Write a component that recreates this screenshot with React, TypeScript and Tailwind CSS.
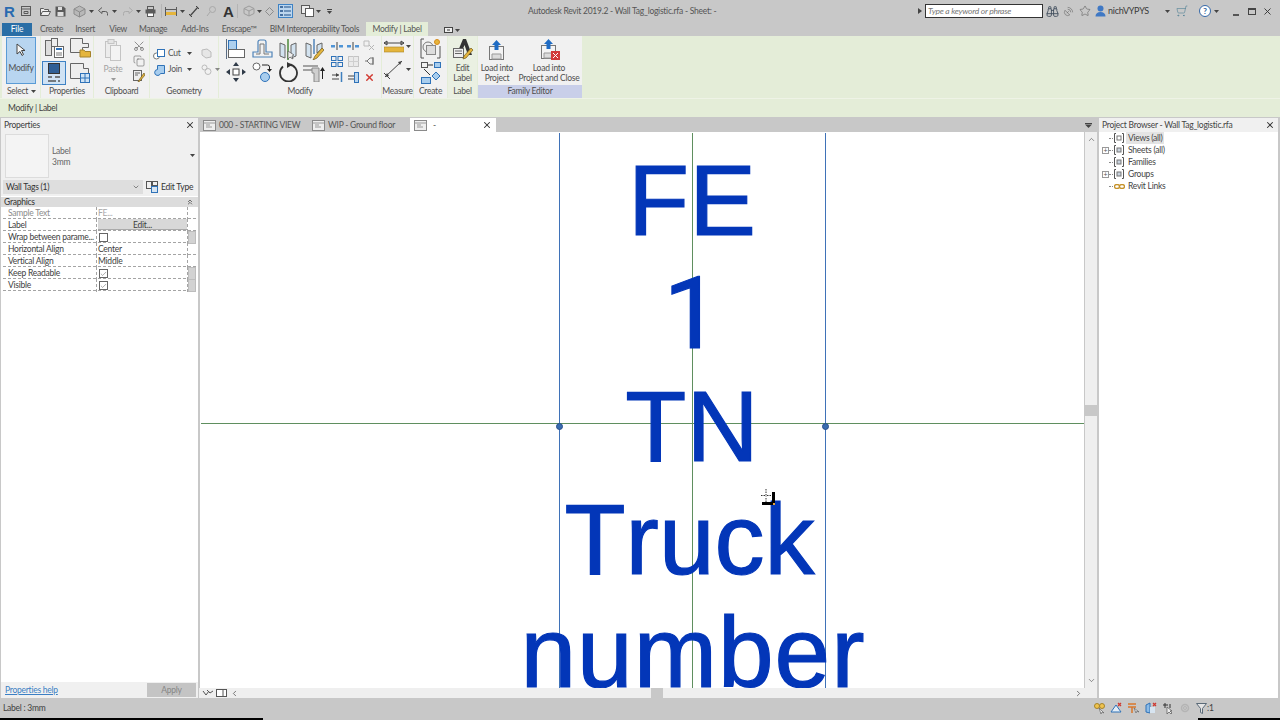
import type { ReactNode } from 'react'
import { X, Check, ChevronUp, ChevronDown, ChevronLeft, ChevronRight, ChevronsUp, Star, Binoculars, SatelliteDish, ShoppingCart, Scissors, Copy } from 'lucide-react'

const BLUE = '#2f72b8'
const GRAY = '#5a5a5a'
const GOLD = '#e5b53c'

function Ico({ w, h, children, className }: { w: number; h: number; children: ReactNode; className?: string }) {
  return (
    <svg width={w} height={h} viewBox={`0 0 ${w} ${h}`} fill="none" className={`shrink-0 ${className ?? ''}`}>
      {children}
    </svg>
  )
}

function Caret({ className }: { className?: string }) {
  return (
    <Ico w={5} h={3} className={className}>
      <path d="M0 0h5L2.500 3z" fill="#444" />
    </Ico>
  )
}

function ViewTabIcon() {
  return (
    <Ico w={13} h={11}>
      <rect x=".5" y=".5" width="12" height="10" fill="#eee" stroke="#8a8a8a" />
      <path d="M.5 3h12M3 5h4M3 7h6" stroke="#9a9a9a" />
    </Ico>
  )
}

function QuickAccess() {
  return (
    <div className="flex items-center w-[528px] h-full pl-[4px]">
      <span className="w-[12px] text-[15px] leading-none font-bold text-[#2a6bb0] font-['Liberation_Sans',sans-serif]">R</span>
      <Ico w={10} h={10} className="ml-[5px]"><rect x=".5" y=".5" width="9" height="9" stroke={GRAY} /><path d="M.5 3h9M3 5.500h4v2H3z" stroke={GRAY} /></Ico>
      <Ico w={11} h={9} className="ml-[9px]"><path d="M.5 8.500v-7h3l1 1h4v2M.5 8.500l2-4h8l-2 4z" stroke={GRAY} fill="#eee" /></Ico>
      <Ico w={11} h={11} className="ml-[4px]"><path d="M.5.500h8l2 2v8H.500z" fill={GRAY} /><rect x="3" y="1" width="4" height="3" fill="#ddd" /><rect x="2.500" y="6" width="6" height="4" fill="#ddd" /></Ico>
      <Ico w={13} h={13} className="ml-[7px]"><path d="M6.500 1 12 4v5l-5.500 3L1 9V4z" fill="#b8b8b8" stroke="#8c8c8c" /><path d="M1 4l5.500 3L12 4M6.500 7v5" stroke="#8c8c8c" /></Ico>
      <Caret className="ml-[3px]" />
      <Ico w={11} h={9} className="ml-[4px]"><path d="M4 .500.500 3.500 4 6.500V4.500h3.500a2 2 0 0 1 2 2v2" stroke={GRAY} /></Ico>
      <Caret className="ml-[3px]" />
      <Ico w={11} h={9} className="ml-[5px]"><path d="M7 .500l3.500 3L7 6.500V4.500H3.500a2 2 0 0 0-2 2v2" stroke="#aaa" /></Ico>
      <Caret className="ml-[3px]" />
      <Ico w={11} h={11} className="ml-[4px]"><rect x="2.500" y=".5" width="6" height="3" stroke={GRAY} /><rect x=".5" y="3.500" width="10" height="4" fill={GRAY} /><rect x="2.500" y="7" width="6" height="3.500" fill="#fff" stroke={GRAY} /></Ico>
      <div className="ml-[5px] w-px h-[14px] bg-[#b4b4b4]" />
      <Ico w={12} h={9} className="ml-[3px]"><path d="M.5 0v9M11.500 0v9" stroke={GRAY} /><rect x="1" y="5" width="10" height="3" fill={GOLD} /><path d="M1 2.500h10" stroke={GRAY} /></Ico>
      <Caret className="ml-[3px]" />
      <Ico w={10} h={11} className="ml-[4px]"><path d="M1 10 9 1" stroke="#444" strokeWidth="1.200" /><path d="M0 8l3 3M7 0l3 3" stroke="#444" /></Ico>
      <Ico w={10} h={11} className="ml-[7px]"><circle cx="6.500" cy="3.500" r="3" stroke="#a8a8a8" /><path d="M4 6l-3 4" stroke="#a8a8a8" /></Ico>
      <span className="ml-[7px] w-[9px] text-[15px] leading-none font-bold text-[#333] font-['Liberation_Sans',sans-serif]">A</span>
      <div className="ml-[5px] w-px h-[14px] bg-[#b4b4b4]" />
      <Ico w={12} h={12} className="ml-[5px]"><path d="M6 1l5 2.500v5L6 11 1 8.500v-5z" stroke="#9c9c9c" /><path d="M1 3.500 6 6l5-2.500M6 6v5" stroke="#9c9c9c" /></Ico>
      <Caret className="ml-[2px]" />
      <Ico w={9} h={9} className="ml-[3px]"><path d="M4.500.500l4 4-4 4-4-4z" stroke="#8d8d8d" /></Ico>
      <div className="ml-[4px] w-[15px] h-[14px] flex items-center justify-center bg-[#bcd6ee] border border-[#3e82c4]">
        <Ico w={11} h={10}><path d="M0 1h3M0 5h3M0 9h3" stroke="#1f4f86" strokeWidth="1.500" /><path d="M4 1h7M4 5h7M4 9h7" stroke="#1f4f86" /></Ico>
      </div>
      <Ico w={13} h={12} className="ml-[8px]"><rect x=".5" y=".5" width="8" height="8" fill="#eee" stroke={GRAY} /><rect x="4.500" y="3.500" width="8" height="8" fill="#fff" stroke={GRAY} /></Ico>
      <Caret className="ml-[2px]" />
      <Ico w={5} h={5} className="ml-[6px]"><path d="M0 .500h5" stroke="#444" /><path d="M0 2h5L2.500 5z" fill="#444" /></Ico>
    </div>
  )
}

function InfoCenter() {
  return (
    <div className="flex items-center h-full text-[#3b3b3b]">
      <Ico w={4} h={6}><path d="M0 0l4 3-4 3z" fill="#444" /></Ico>
      <div className="ml-[3px] w-[118px] h-[14px] bg-white border border-[#333] pl-[2px] text-[8.5px] italic leading-[12px] text-[#777]">Type a keyword or phrase</div>
      <Binoculars size={13} strokeWidth={1.6} className="ml-[3px] text-[#3d4a5a]" />
      <SatelliteDish size={11} strokeWidth={1.3} className="ml-[4px] text-[#666]" />
      <Star size={12} strokeWidth={1.1} className="ml-[5px] text-[#555]" />
      <Ico w={11} h={12} className="ml-[4px]"><circle cx="5.500" cy="3.500" r="3" fill="#3f78c4" /><path d="M.5 11.500c0-3 2-4.500 5-4.500s5 1.500 5 4.500z" fill="#3f78c4" /></Ico>
      <span className="ml-[2px] w-[57px] text-[9px]">nichVYPYS</span>
      <Caret />
      <ShoppingCart size={12} strokeWidth={1.2} className="ml-[6px] text-[#4d7f93] -scale-x-100" />
      <div className="ml-[11px] w-[12px] h-[12px] rounded-full border border-[#3568a8] bg-white text-center text-[8px] font-bold leading-[10px] text-[#2f5f9c]">?</div>
      <Caret className="ml-[3px]" />
      <div className="ml-[14px] w-[6px] h-[2px] bg-[#555] self-end mb-[6px]" />
      <div className="ml-[9px] w-[8px] h-[7px] border border-[#444] border-t-2" />
      <X size={11} strokeWidth={2} className="ml-[6px] text-[#333]" />
    </div>
  )
}

const RIBBON_TABS: [string, string][] = [
  ['Create', 'ml-[8px]'],
  ['Insert', 'ml-[12px]'],
  ['View', 'ml-[14px]'],
  ['Manage', 'ml-[12px]'],
  ['Add-Ins', 'ml-[14px]'],
  ['Enscape™', 'ml-[13px]'],
  ['BIM Interoperability Tools', 'ml-[13px]'],
]

function Panel({ title, width, children, className }: { title: string; width: string; children: ReactNode; className?: string }) {
  return (
    <div className={`flex flex-col h-full ${width} ${className ?? 'bg-[#f1f1f1]'}`}>
      <div className="h-[49px] flex">{children}</div>
      <div className="h-[13px] text-center text-[8.5px] leading-[12px]">{title}</div>
    </div>
  )
}

function LoadIcon({ close }: { close?: boolean }) {
  return (
    <Ico w={22} h={21}>
      <rect x="3.500" y="6.500" width="14" height="13" fill="#f4f4f4" stroke="#777" />
      <path d="M6 14h9v5H6z" fill="#dcdcdc" stroke="#999" />
      <path d="M10.500 0l4.500 5h-2.500v5h-4V5H6z" fill="#1f6cc4" />
      {close && <rect x="13" y="12" width="9" height="9" fill="#d23b3b" />}
      {close && <path d="M15 14l5 5M20 14l-5 5" stroke="#fff" />}
    </Ico>
  )
}

function Ribbon() {
  return (
    <div className="h-[62px] bg-[#e4edd8] flex pl-[2px] gap-px text-[#4f4f4f]">
      <div className="flex flex-col w-[38px] bg-[#f1f1f1]">
        <div className="h-[49px] pl-[4px] pt-px">
          <div className="w-[30px] h-[47px] bg-[#b8d5f0] border border-[#5a9bd6] flex flex-col items-center pt-[5px] text-[8.5px]">
            <Ico w={10} h={14}><path d="M1 1v10l3-2.500 2 4 1.500-1-2-4H9z" fill="#f7f7f7" stroke="#444" /></Ico>
            <span className="mt-[5px]">Modify</span>
          </div>
        </div>
        <div className="h-[13px] flex items-center justify-center gap-[3px] text-[8.5px] pl-px">Select <Caret /></div>
      </div>

      <Panel title="Properties" width="w-[52px]">
        <div className="grid grid-cols-[26px_26px] gap-y-[2px] pt-[2px] place-items-center">
          <Ico w={20} h={20}>
            <rect x="1.500" y="2.500" width="6" height="15" fill="#ddd" stroke="#666" /><rect x="7.500" y=".5" width="6" height="8" fill="#eee" stroke="#666" />
            <rect x="10.500" y="8.500" width="9" height="11" fill="#fff" stroke="#666" /><path d="M12 11h6" stroke={BLUE} strokeWidth="2" /><path d="M12 15h6M12 17h6" stroke="#777" />
          </Ico>
          <Ico w={21} h={20}>
            <path d="M.5.500h12v5h6v4h-6v5H.500z" fill="#eee" stroke="#666" />
            <path d="M10 12h4l1 1.500h5.500V19H10z" fill={GOLD} stroke="#a5832a" />
          </Ico>
          <div className="w-[24px] h-[24px] bg-[#cfe2f4] border border-[#3e82c4] flex items-center justify-center">
            <Ico w={14} h={20}>
              <rect x="1.500" y=".5" width="11" height="10" fill="#2f5f96" stroke="#333" />
              <path d="M1 14h4M8 14h5M1 18h8M11 18h2" stroke="#555" strokeWidth="1.500" />
            </Ico>
          </div>
          <Ico w={22} h={22}>
            <path d="M1.500 1.500h13v5h5v6h-5v4h-13z" fill="#eee" stroke="#666" />
            <rect x="11.500" y="11.500" width="9" height="9" fill="#cfe3f5" stroke={BLUE} /><path d="M16 12v8M12 16h8" stroke={BLUE} />
          </Ico>
        </div>
      </Panel>

      <Panel title="Clipboard" width="w-[55px]">
        <div className="flex flex-col items-center w-[38px] pt-[3px] text-[8.5px] text-[#a2a2a2]">
          <Ico w={18} h={22}>
            <rect x="1.500" y="2.500" width="11" height="16" fill="#ececec" stroke="#c4c4c4" /><rect x="6.500" y="6.500" width="10" height="15" fill="#f3f3f3" stroke="#c4c4c4" /><rect x="4" y="0.500" width="6" height="4" fill="#e4e4e4" stroke="#c4c4c4" />
          </Ico>
          <span className="mt-[3px] leading-[10px]">Paste</span>
          <Caret className="mt-[4px] opacity-50" />
        </div>
        <div className="flex flex-col items-center gap-[3px] pt-[4px] pl-px text-[#444]">
          <Scissors size={12} strokeWidth={1.4} className="rotate-[-90deg] text-[#666]" />
          <Copy size={12} strokeWidth={1.1} className="text-[#555]" />
          <Ico w={12} h={12}><rect x=".5" y=".5" width="8" height="10" fill="#eee" stroke="#666" /><path d="M2 3h5M2 5h3" stroke="#666" /><path d="M11 3l-5 7-1 2 2-1 5-6z" fill={GOLD} stroke="#705a1d" strokeWidth=".7" /></Ico>
        </div>
      </Panel>

      <Panel title="Geometry" width="w-[68px]">
        <div className="flex flex-col gap-[3px] pl-[3px] pt-[11px] text-[8.5px] text-[#555]">
          <div className="flex items-center h-[13px]">
            <Ico w={12} h={12}><circle cx="3.500" cy="8" r="3" fill="#fff" stroke="#777" /><rect x="4.500" y="1.500" width="7" height="7" fill="#fff" stroke={BLUE} /></Ico>
            <span className="ml-[3px] w-[16px]">Cut</span>
            <Caret className="ml-[3px]" />
            <Ico w={11} h={11} className="ml-[9px]"><path d="M1 2l5-1 4 3v5l-5 1-4-3z" fill="#e6e6e6" stroke="#bbb" /></Ico>
          </div>
          <div className="flex items-center h-[13px]">
            <Ico w={12} h={12}><path d="M4.500 1.500h7v8h-4a3 3 0 1 1-3-4z" fill="#a8cdee" stroke={BLUE} /></Ico>
            <span className="ml-[3px] w-[16px]">Join</span>
            <Caret className="ml-[3px]" />
            <Ico w={11} h={11} className="ml-[9px]"><circle cx="3.500" cy="3.500" r="2.500" stroke="#bbb" /><circle cx="7" cy="7.500" r="3" stroke="#bbb" /></Ico>
            <Caret className="ml-[3px] opacity-60" />
          </div>
        </div>
      </Panel>

      <Panel title="Modify" width="w-[162px]">
        <div className="grid grid-cols-[26px_26px_26px_26px] grid-rows-[22px_24px] pl-[4px] pt-[2px] place-items-center">
          <Ico w={20} h={20}><path d="M.5 0v20" stroke="#5a6c82" /><rect x="2.500" y="1.500" width="8" height="9" fill="#aed0ee" stroke={BLUE} /><rect x="2.500" y="10.500" width="16" height="8" fill="#fff" stroke="#666" /></Ico>
          <Ico w={21} h={20}><path d="M1 18v-5h5V3a2 2 0 0 1 2-2h4a2 2 0 0 1 2 2v10h6v5z" stroke="#4f83b8" strokeWidth="1.200" /><path d="M4 15h4V5h4v10h5" stroke="#777" /></Ico>
          <Ico w={20} h={21}><path d="M2 4l5 2v13l-5-2zM18 4l-5 2v13l5-2z" fill="#d3e3f0" stroke="#666" /><path d="M10 0v21" stroke="#4b8a3b" strokeWidth="1.500" /><path d="M10 12v8l2-2 3 2-1-3 2-1z" fill="#eee" stroke="#555" strokeWidth=".7" /></Ico>
          <Ico w={20} h={21}><path d="M2 4l5 2v13l-5-2zM18 4l-5 2v8l5-4z" fill="#d3e3f0" stroke="#666" /><path d="M10 0v15" stroke="#4f83b8" strokeWidth="1.500" /><path d="M18 9l-7 8-2 4 4-2 7-8z" fill={GOLD} stroke="#705a1d" strokeWidth=".7" /></Ico>
          <Ico w={20} h={20}><rect x="7" y="7" width="6" height="6" fill="#fff" stroke="#444" /><path d="M10 0l3 4H7zM10 20l3-4H7zM0 10l4-3v6zM20 10l-4-3v6z" fill="#2f3a48" /></Ico>
          <Ico w={20} h={20}><circle cx="4.500" cy="4.500" r="3.500" fill="#fff" stroke="#666" /><circle cx="13" cy="15" r="4.500" fill="#a8cdee" stroke={BLUE} /><path d="M10 3h5.500a2 2 0 0 1 2 2v3" stroke="#222" /><path d="M15 7h5l-2.500 3z" fill="#222" /></Ico>
          <Ico w={20} h={20}><path d="M5 4.500a8.500 8.500 0 1 0 6-2" stroke="#333" strokeWidth="1.800" /><path d="M9 0v6l5-3z" fill="#333" /></Ico>
          <Ico w={22} h={20}><path d="M0 4h15M0 8h15" stroke="#555" strokeWidth="1.200" /><path d="M9 6h7v14h-5V11H9z" fill="#cfcfcf" stroke="#888" /><path d="M19.500 17V8" stroke="#222" /><path d="M17 9l2.500-4L22 9z" fill="#222" /></Ico>
        </div>
        <div className="grid grid-cols-[16px_16px_16px] grid-rows-[15px_16px_16px] ml-[2px] pt-[2px] place-items-center">
          <Ico w={12} h={8}><path d="M6 0v8" stroke="#444" /><rect x="0" y="3" width="4" height="2.500" fill="#4f94d6" /><rect x="8" y="3" width="4" height="2.500" fill="#4f94d6" /></Ico>
          <Ico w={12} h={8}><path d="M6 0v8" stroke="#444" /><rect x="0" y="3" width="4" height="2.500" fill="#4f94d6" /><rect x="8" y="3" width="4" height="2.500" fill="#4f94d6" /></Ico>
          <Ico w={12} h={11}><path d="M1 1h5v5H1z" stroke="#bbb" /><path d="M6 5l5 5M11 5l-5 5" stroke="#b5b5b5" /></Ico>
          <Ico w={12} h={11}><rect x=".5" y=".5" width="4.500" height="4" stroke={BLUE} /><rect x="7" y=".5" width="4.500" height="4" stroke={BLUE} /><rect x=".5" y="6.500" width="4.500" height="4" stroke={BLUE} /><rect x="7" y="6.500" width="4.500" height="4" stroke={BLUE} /></Ico>
          <Ico w={11} h={11}><rect x=".5" y=".5" width="10" height="10" fill="#eaeaea" stroke="#c4c4c4" /><path d="M5.500 0v11M0 5.500h11" stroke="#cfcfcf" /></Ico>
          <Ico w={11} h={10}><path d="M1 5h2l3-3h3v6H6L3 5" stroke="#777" /><path d="M9 1v8" stroke="#777" /></Ico>
          <Ico w={11} h={10}><path d="M0 3h7M0 7h7" stroke="#444" /><path d="M9.500 0v10" stroke="#3e7fbe" strokeWidth="1.500" /><path d="M4 1l3 2-3 2z" fill="#444" /></Ico>
          <Ico w={11} h={11}><path d="M0 4h7M0 7h7" stroke="#444" /><rect x="6.500" y=".5" width="4" height="10" fill="#b9d5ee" stroke={BLUE} /></Ico>
          <X size={11} strokeWidth={3} className="text-[#d13a32]" />
        </div>
      </Panel>

      <Panel title="Measure" width="w-[31px]">
        <div className="flex flex-col pl-[2px] pt-[4px] gap-[6px]">
          <div className="flex items-center gap-[2px]">
            <Ico w={20} h={13}><path d="M0 3h20M0 3l3-2v4zM20 3l-3-2v4z" stroke="#444" /><rect x="0" y="7" width="20" height="5" fill={GOLD} stroke="#a5832a" strokeWidth=".6" /></Ico>
            <Caret />
          </div>
          <div className="flex items-center gap-[2px]">
            <Ico w={20} h={21}><path d="M1 18 18 2" stroke="#444" /><path d="M1 18l4-1-2-3zM18 2l-4 1 2 3z" fill="#444" /><path d="M0 14l6 6" stroke="#444" /></Ico>
            <Caret />
          </div>
        </div>
      </Panel>

      <Panel title="Create" width="w-[33px]">
        <div className="flex flex-col items-center w-full pt-[2px] gap-[3px]">
          <Ico w={21} h={21}><path d="M4 1H1v19h3M17 20h3V8" stroke="#555" /><circle cx="8" cy="9" r="5" fill="#f0f0f0" stroke="#777" /><rect x="6.500" y="7.500" width="9" height="9" fill="#ddd" stroke="#888" /><circle cx="17" cy="4" r="2.500" fill={GOLD} stroke="#d68a1b" /></Ico>
          <Ico w={21} h={23}><rect x="1.500" y=".5" width="6" height="5" stroke="#555" /><rect x="14.500" y=".5" width="6" height="5" fill="#a8cdee" stroke={BLUE} /><path d="M8 3h5M4 7l6 6" stroke="#333" /><rect x="1.500" y="15.500" width="9" height="6" fill="#a8cdee" stroke={BLUE} /><path d="M16 10l4 4-4 4-4-4z" fill="#a8cdee" stroke={BLUE} /></Ico>
        </div>
      </Panel>

      <Panel title="Label" width="w-[29px]" className="bg-[#eaf0e2]">
        <div className="flex flex-col items-center w-full pt-[2px] text-[8.5px] leading-[10px] text-center">
          <Ico w={22} h={22}>
            <path d="M11 1h3l6 16h-4l-3.500-10L10 13H6z" fill="#333" />
            <rect x="1.500" y="10.500" width="10" height="9" fill="#eee" stroke="#666" /><path d="M3 13h7M3 15.500h7" stroke="#666" />
            <path d="M19 10l-7 8-1 3 3-1 7-8z" fill={GOLD} stroke="#705a1d" strokeWidth=".7" />
          </Ico>
          <span className="mt-[3px]">Edit</span>
          <span>Label</span>
        </div>
      </Panel>

      <div className="flex flex-col w-[104px] bg-[#f1f1f1]">
        <div className="h-[49px] flex text-[8.5px] leading-[10px] text-center">
          <div className="w-[38px] flex flex-col items-center pt-[4px]">
            <LoadIcon />
            <span className="mt-[2px]">Load into</span>
            <span>Project</span>
          </div>
          <div className="w-[66px] flex flex-col items-center pt-[3px]">
            <LoadIcon close />
            <span className="mt-[3px]">Load into</span>
            <span className="whitespace-nowrap">Project and Close</span>
          </div>
        </div>
        <div className="h-[13px] text-center text-[8.5px] leading-[12px] bg-[#c9cfe9]">Family Editor</div>
      </div>
    </div>
  )
}

const PROP_ROWS = [
  { name: 'Sample Text', value: 'FE...', muted: true },
  { name: 'Label', button: true },
  { name: 'Wrap between parame...', check: false, bar: true },
  { name: 'Horizontal Align', value: 'Center' },
  { name: 'Vertical Align', value: 'Middle' },
  { name: 'Keep Readable', check: true, bar: true },
  { name: 'Visible', check: true, bar: true },
]

function PropertiesPanel() {
  return (
    <div className="w-[197px] ml-px flex flex-col bg-white text-[8.5px] text-[#3d3d3d]">
      <div className="h-[14px] bg-[#f0f0f0] flex items-center justify-between pl-[3px] pr-[3px]">
        <span>Properties</span>
        <X size={10} strokeWidth={2.5} className="text-[#333]" />
      </div>
      <div className="h-[47px] bg-[#f0f0f0] flex items-center pl-[4px] pr-[3px]">
        <div className="w-[44px] h-[44px] bg-[#f4f4f4] border border-[#dcdcdc]" />
        <div className="ml-[3px] pt-[2px] flex-1 leading-[11px] text-[#666]">Label<br />3mm</div>
        <Caret />
      </div>
      <div className="h-[17px] bg-[#f0f0f0] flex items-center pl-[2px] pb-px">
        <div className="w-[140px] h-[14px] bg-[#dedede] flex items-center justify-between pl-[3px] pr-[3px] text-[#333]">
          <span>Wall Tags (1)</span>
          <ChevronDown size={8} className="text-[#555]" />
        </div>
        <Ico w={12} h={12} className="ml-[3px]"><rect x=".5" y=".5" width="5" height="7" stroke="#555" /><rect x="6.500" y=".5" width="5" height="4" stroke="#555" /><rect x="5.500" y="5.500" width="6" height="6" fill="#d5e4f2" stroke={BLUE} /></Ico>
        <span className="ml-[3px] text-[#333] whitespace-nowrap">Edit Type</span>
      </div>
      <div className="h-[10px] mt-px bg-[#dcdcdc] flex items-center justify-between pl-[3px] pr-[4px]">
        <span className="font-medium">Graphics</span>
        <ChevronsUp size={8} strokeWidth={2} className="text-[#333]" />
      </div>
      <div className="flex flex-col px-[2px]">
        {PROP_ROWS.map((r) => (
          <div key={r.name} className="grid grid-cols-[94px_91px_8px] h-[12px] border-b border-dashed border-[#a4a4a4] leading-[13px]">
            <div className={`pl-[5px] whitespace-nowrap border-r border-dashed border-[#a4a4a4] ${r.muted ? 'text-[#8c8c8c]' : ''}`}>{r.name}</div>
            <div className={`pl-px border-r border-dashed border-[#a4a4a4] ${r.muted ? 'text-[#a8a8a8]' : ''}`}>
              {r.value}
              {r.button && <div className="h-[11px] bg-[#d8d8d8] text-center border-b border-[#aaa] leading-[12px]">Edit...</div>}
              {r.check !== undefined && (
                <div className="ml-px mt-[2px] w-[9px] h-[9px] border border-[#666] bg-white flex items-center justify-center">
                  {r.check && <Check size={8} strokeWidth={1.5} className="text-[#444]" />}
                </div>
              )}
            </div>
            <div className={r.bar ? 'bg-[#d2d2d2] border border-[#bdbdbd]' : ''} />
          </div>
        ))}
      </div>
      <div className="flex-1" />
      <div className="h-[16px] bg-[#f0f0f0] flex items-center justify-between pl-[4px] pr-[2px]">
        <span className="underline text-[#3b7fc4]">Properties help</span>
        <div className="w-[49px] h-[14px] bg-[#c4c4c4] text-center leading-[14px] text-[#868686]">Apply</div>
      </div>
    </div>
  )
}

function DocTabs() {
  return (
    <div className="h-[14px] flex items-center text-[8.5px] text-[#555] pl-[4px]">
      <ViewTabIcon />
      <span className="ml-[3px] w-[93px]">000 - STARTING VIEW</span>
      <ViewTabIcon />
      <span className="ml-[3px] w-[82px]">WIP - Ground floor</span>
      <div className="w-[86px] h-full bg-white flex items-center pl-[4px] pr-[4px]">
        <ViewTabIcon />
        <span className="ml-[6px] flex-1">-</span>
        <X size={10} strokeWidth={2.5} className="text-[#333]" />
      </div>
      <div className="flex-1" />
      <Ico w={7} h={5} className="mr-[5px]"><path d="M0 .500h7" stroke="#444" /><path d="M0 1.500h7L3.500 5z" fill="#444" /></Ico>
    </div>
  )
}

function Pin({ left }: { left: string }) {
  return <div className={`absolute top-[291px] w-[7px] h-[7px] rounded-full bg-[#3a6db0] border border-[#2a4f8c] ${left}`} />
}

function Canvas() {
  return (
    <div className="relative flex-1 min-h-0 bg-white overflow-hidden">
      <div className="absolute top-px bottom-0 left-[359px] w-px bg-[#3f72b8]" />
      <div className="absolute top-px bottom-0 left-[625px] w-px bg-[#3f72b8]" />
      <div className="absolute top-px bottom-0 left-[492px] w-px bg-[#5f8f5f]" />
      <div className="absolute left-px right-0 top-[291px] h-px bg-[#5f8f5f]" />
      <Pin left="left-[356px]" />
      <Pin left="left-[622px]" />
      <div className="relative flex flex-col items-center pl-[100px] pt-[12px] font-['Liberation_Sans',Arial,sans-serif] text-[100px] leading-[113px] tracking-normal [font-kerning:none] text-[#0336b8] [-webkit-text-stroke:1.2px_#0336b8]">
        <span>FE</span>
        <span className="font-['Roboto',sans-serif] text-[101px]">1</span>
        <span>TN</span>
        <span className="mr-[5px]">Truck</span>
        <span className="ml-[2px] tracking-[1px]">number</span>
      </div>
      <div className="absolute left-[559px] top-[357px]">
        <Ico w={18} h={17}>
          <path d="M7 0v4M7 5v3M7 9v4M2 6.500h4M8 6.500h4" stroke="#333" strokeDasharray="1.500 1" />
          <path d="M13 3h3v13H3v-3h10z" fill="#000" />
          <rect x="14" y="14" width="2" height="2" fill="#e8a33c" />
        </Ico>
      </div>
    </div>
  )
}

const TREE = [
  { label: 'Views (all)', active: true },
  { label: 'Sheets (all)', plus: true },
  { label: 'Families' },
  { label: 'Groups', plus: true },
  { label: 'Revit Links', link: true },
]

function ProjectBrowser() {
  return (
    <div className="w-[179px] ml-[2px] flex flex-col bg-white text-[8.5px] text-[#444]">
      <div className="h-[14px] bg-[#f0f0f0] flex items-center justify-between pl-[3px] pr-[3px]">
        <span>Project Browser - Wall Tag_logistic.rfa</span>
        <X size={10} strokeWidth={2.5} className="text-[#333]" />
      </div>
      <div className="flex flex-col pl-[3px]">
        {TREE.map((t) => (
          <div key={t.label} className="h-[12px] flex items-center">
            <div className="w-[7px] h-[7px] flex items-center justify-center">
              {t.plus && <div className="w-[7px] h-[7px] border border-[#999] bg-white text-[7px] leading-[5px] text-center text-[#555]">+</div>}
            </div>
            <div className="w-[4px] border-t border-dotted border-[#888]" />
            <div className="w-[10px] ml-[1px] flex justify-center">
              {t.link ? (
                <Ico w={11} h={5}><ellipse cx="3" cy="2.500" rx="2.500" ry="2" fill="#fff" stroke="#c5922a" strokeWidth="1.300" /><ellipse cx="8" cy="2.500" rx="2.500" ry="2" fill="#fff" stroke="#c5922a" strokeWidth="1.300" /></Ico>
              ) : (
                <Ico w={10} h={10}><path d="M2 .500H.500v9H2M8 .500h1.500v9H8" stroke="#555" /><rect x="3" y="3" width="4" height="4" fill={t.active ? '#fff' : '#c9d3de'} stroke="#777" /></Ico>
              )}
            </div>
            <span className={`ml-[2px] pl-[2px] pr-[1px] ${t.active ? 'bg-[#e4e4e4]' : ''}`}>{t.label}</span>
          </div>
        ))}
      </div>
    </div>
  )
}

function StatusIcons() {
  return (
    <div className="flex items-center">
      <Ico w={11} h={11}><circle cx="3" cy="3" r="2.500" fill="#f0c34e" stroke="#a5832a" /><circle cx="8" cy="3" r="2.500" fill="#f0c34e" stroke="#a5832a" /><path d="M5 5l2 6 1-2 2 1z" fill="#eee" stroke="#555" strokeWidth=".6" /></Ico>
      <Ico w={12} h={12} className="ml-[5px]"><path d="M1 10 6 3l5 7z" fill="#e4eef7" stroke={BLUE} /><path d="M8 1l3 3M11 1 8 4" stroke="#cf3a32" strokeWidth="1.300" /></Ico>
      <Ico w={12} h={12} className="ml-[5px]"><path d="M1 2h8M1 5h8" stroke="#d9772b" strokeWidth="1.500" /><path d="M5 5v6" stroke="#d9772b" strokeWidth="1.500" /><path d="M7 6l2 5 1-2 2 1z" fill="#eee" stroke="#555" strokeWidth=".6" /></Ico>
      <Ico w={12} h={12} className="ml-[6px]"><path d="M1 3l4-2v10l-4-1z" fill="#8cbbe6" stroke={BLUE} /><path d="M8 1l3 3M11 1 8 4" stroke="#cf3a32" strokeWidth="1.300" /><path d="M5 5h5v6H5z" fill="#d7e4f0" /></Ico>
      <Ico w={11} h={11} className="ml-[6px]"><path d="M2 0v5M0 2h5M7 1v4" stroke="#333" /><path d="M4 4v7l2-2 2 2 1-1-2-2h2z" fill="#eee" stroke="#555" strokeWidth=".7" /></Ico>
      <Ico w={10} h={10} className="ml-[6px]"><circle cx="5" cy="5" r="3.500" stroke="#b4b4b4" strokeWidth="1.500" /><circle cx="5" cy="5" r="1.500" stroke="#b4b4b4" /></Ico>
      <Ico w={11} h={11} className="ml-[6px]"><path d="M.5.500h10L6.500 5.500v5l-2-1v-4z" fill="#e4e4e4" stroke="#5a6a78" /></Ico>
      <span className="text-[8.5px] w-[8px]">:1</span>
    </div>
  )
}

export default function App() {
  return (
    <div className="w-[1280px] h-[720px] flex flex-col overflow-hidden bg-[#c8c8c8] font-['Lato',sans-serif] tracking-[-0.25px] text-[#404040]">
      <div className="h-[22px] flex items-center">
        <QuickAccess />
        <div className="w-[390px] text-[8.5px] text-[#555]">Autodesk Revit 2019.2 - Wall Tag_logistic.rfa - Sheet: -</div>
        <InfoCenter />
      </div>

      <div className="h-[14px] flex items-end text-[8.5px] text-[#555] pl-[2px]">
        <div className="w-[30px] h-[13px] bg-[#2a6ea6] text-white text-center leading-[13px]">File</div>
        {RIBBON_TABS.map(([t, m]) => (
          <span key={t} className={`${m} leading-[14px] whitespace-nowrap`}>{t}</span>
        ))}
        <div className="ml-[7px] w-[62px] h-[14px] bg-[#e4edd8] text-center leading-[14px]">Modify | Label</div>
        <Ico w={9} h={6} className="ml-[16px] mb-[3px]"><rect x=".5" y=".5" width="8" height="5" fill="#eee" stroke="#444" /><path d="M3 3h3" stroke="#333" /></Ico>
        <Caret className="ml-[2px] mb-[4px]" />
      </div>

      <Ribbon />

      <div className="h-[19px] bg-[#e4edd8] border-t border-[#eef3e6] flex items-center pl-[8px] text-[8.5px]">Modify | Label</div>

      <div className="h-px" />

      <div className="h-[580px] flex">
        <PropertiesPanel />
        <div className="flex-1 min-h-0 ml-px flex flex-col">
          <DocTabs />
          <div className="flex-1 min-h-0 flex pl-px">
            <Canvas />
            <div className="w-[12px] ml-px bg-[#efefef] flex flex-col items-center justify-between py-[3px] relative">
              <ChevronUp size={9} strokeWidth={1.5} />
              <div className="absolute top-[273px] w-[12px] h-[11px] bg-[#c8c8c8]" />
              <ChevronDown size={9} strokeWidth={1.5} />
            </div>
          </div>
          <div className="h-[10px] bg-[#efefef] flex items-center pl-[3px] pr-[14px]">
            <Ico w={12} h={8}><path d="M1 2l3 4 3-4M5 1l3 3 3-2" stroke="#555" /></Ico>
            <Ico w={11} h={8} className="ml-[2px]"><rect x=".5" y=".5" width="10" height="7" fill="#fff" stroke="#555" /><path d="M7 1v6" stroke="#555" /></Ico>
            <ChevronLeft size={9} strokeWidth={1.8} className="ml-[3px]" />
            <div className="ml-[412px] w-[12px] h-[10px] bg-[#c8c8c8]" />
            <div className="flex-1" />
            <ChevronRight size={9} strokeWidth={1.8} />
          </div>
        </div>
        <ProjectBrowser />
        <div className="w-[2px]" />
      </div>

      <div className="flex-1 flex items-center justify-between pl-[3px] pr-[65px] text-[8.5px]">
        <span>Label : 3mm</span>
        <StatusIcons />
      </div>

      <div className="h-[2px] flex">
        <div className="w-[263px] bg-black" />
        <div className="flex-1" />
        <div className="w-[82px] bg-black" />
      </div>
    </div>
  )
}
